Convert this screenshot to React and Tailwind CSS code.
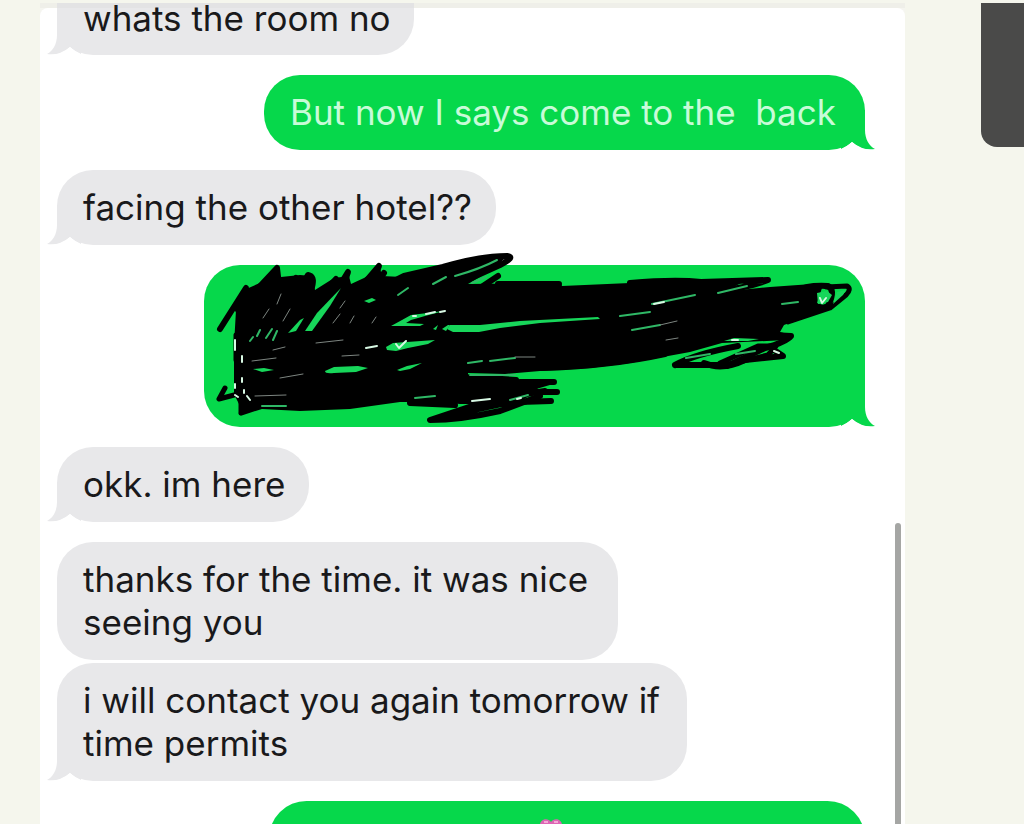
import React from 'react';
import clsx from 'clsx';

const messages = [
  { id: 1, from: 'them', text: 'whats the room no', tail: true, shape: 'w-[357px] h-[52px] leading-[30px] rounded-b-[36px]' },
  { id: 2, from: 'me', text: 'But now I says come to the  back', tail: true, shape: 'mt-5 w-[601px] py-4 rounded-[36px]' },
  { id: 3, from: 'them', text: 'facing the other hotel??', tail: true, shape: 'mt-5 w-[439px] py-4 rounded-[36px]' },
  { id: 4, from: 'me', redacted: true, tail: true, shape: 'mt-5 w-[661px] h-[162px] rounded-[36px]' },
  { id: 5, from: 'them', text: 'okk. im here', tail: true, shape: 'mt-5 w-[252px] py-4 rounded-[36px]' },
  { id: 6, from: 'them', text: 'thanks for the time. it was nice\nseeing you', shape: 'mt-5 w-[561px] py-4 rounded-[36px]' },
  { id: 7, from: 'them', text: 'i will contact you again tomorrow if\ntime permits', tail: true, shape: 'mt-[3px] w-[630px] py-4 rounded-[36px]' },
  { id: 8, from: 'me', heart: true, shape: 'mt-5 w-[596px] h-[75px] pt-[18px] pr-8 rounded-[38px]' },
];

function Tail({ mine }) {
  return (
    <svg
      viewBox="0 0 34 40"
      className={clsx('absolute bottom-0 h-10 w-[34px]', mine ? '-right-[10px] text-[#06d84b]' : '-left-[10px] -scale-x-100 text-[#e8e8ea]')}
    >
      <path d="M0 0H24V20C24 29 28 36 34 39Q22 41 11 32Q5 37 0 39Z" fill="currentColor" />
      <path d="M-2 40Q5 38 11 32Q18 39 29 40Z" fill="white" />
    </svg>
  );
}

function Scribble() {
  return (
    <svg viewBox="204 265 661 162" className="absolute inset-0 h-full w-full overflow-visible" fill="none" strokeLinecap="round" strokeLinejoin="round">
      {/* main mass */}
      <path
        fill="black"
        d="M234 345L236 310L244 290L262 282L276 270L281 277L300 275L312 276L315 290L334 278L349 276L351 284L364 278L380 268L382 276L402 277L440 266L485 256L505 258L495 268L468 284L560 283L562 286L630 283L672 279L702 280L745 281L722 293L740 290L770 287L812 284L822 288L817 303L830 307L810 315L784 325L780 332L792 335L786 340L722 343L690 352L630 363L590 368L540 371L505 374L468 373L468 376L516 379L540 385L535 392L520 402L490 404L460 404L440 402L400 402L350 409L300 411L262 409L241 408L234 394Z"
      />
      {/* outer strokes */}
      <g stroke="black" strokeWidth="6">
        <path d="M220 329L246 288L244 310M240 332L262 284M238 310L277 268L279 285L266 314" />
        <path d="M262 318L296 278L283 318L308 275Q315 276 312 287L294 321" />
        <path d="M304 315L336 279L321 316L348 272L335 310M350 300L379 266L366 299L384 273" />
        <path d="M384 286L404 276L443 267Q480 256 507 256Q516 257 500 265L440 292M498 276L480 288" />
        <path d="M498 284H559M630 283Q675 279 701 282L768 280Q750 287 719 291" />
        <path d="M800 290Q806 285 828 286Q836 290 828 306L800 316" />
        <path d="M826 287L847 286Q852 289 846 295L830 308L788 322" strokeWidth="5" />
        <path d="M752 334L791 336Q786 342 765 348L727 366" />
        <path d="M675 365Q695 354 738 346M675 365H728M704 363Q722 371 745 360L783 356L774 350" />
        <path d="M720 363L758 346L776 346L768 355L726 365" strokeWidth="5" />
        <path d="M540 368Q610 366 665 354M470 377L516 380M520 382H554M520 392H557M520 402L551 401" />
        <path d="M549 382L508 394L430 420Q460 420 500 411L540 396M455 414L515 401M410 403L455 405" />
        <path d="M480 401L545 391M430 400L480 396" />
        <path d="M225 388L219 399L238 394M236 335L236 360M241 360V413L266 405M241 413L256 395" strokeWidth="5" />
      </g>
      {/* gaps between strokes */}
      <g fill="#17d65a">
        <path d="M325 371L334 367L358 366L368 368L356 372L334 373Q325 374 325 371Z" />
        <path d="M397 370L407 366L422 363L410 369L400 371Z" />
        <path d="M386 347L393 343L435 340L428 344L408 348L396 351L387 350Z" />
        <path d="M391 326L402 320L411 315L444 311L425 316L411 320L406 323L424 324L420 326Z" />
        <path d="M453 332L447 329L450 325L480 325L520 321L598 317L600 319L540 323L500 328L479 332Z" />
        <path d="M305 331L317 313L341 288L330 306L312 331Z" />
        <path d="M288 333L300 320L304 318L296 331Z" />
        <path d="M817 293L827 291L832 295L828 302L818 304Z" />
        <path d="M833 304L837 292L846 290L843 295Z" />
        <path d="M724 341L734 338L759 339L748 341Z" />
        <path d="M253 369L264 368L274 370L262 372ZM364 301L372 298L376 300L369 303Z" />
        <path d="M433 329L438 325L436 330ZM442 329L448 325L450 325L446 331Z" />
      </g>
      <g stroke="#2fb866" strokeWidth="2">
        <path d="M257 336L260 330M266 338L272 329M273 340L277 331M250 341L253 337" />
        <path d="M398 295L408 288M433 284L446 277M455 276Q480 269 497 260M472 283L486 277" />
        <path d="M468 363L482 361M490 361L515 358M470 375L515 375" />
        <path d="M620 316L650 312M632 330L660 325M652 304L695 295M718 293L747 286M782 304L798 302" />
        <path d="M686 358L710 354M736 354L755 351M415 398L435 396M510 400L528 395M262 406L286 406" />
      </g>
      <g stroke="#7d8580" strokeWidth="1">
        <path d="M277 304L281 294M263 318L269 309M283 321L290 309M333 323L340 314M350 323L354 316M340 308L345 301M372 323L376 317" />
        <path d="M316 343L343 340M342 356L359 355M273 350L285 347M280 378L303 374M255 396L286 395M252 361L276 358M666 340L678 338M515 357L535 357M660 325L677 321" />
      </g>
      <g stroke="#d8f9e4" strokeWidth="2">
        <path d="M396 344L399 348L406 341M366 348L377 346M235 340V350M242 356V362M242 378V382M235 384V388M235 395L238 397M247 396L250 400M244 390V393" />
        <path d="M413 316H416M426 314L435 312M440 312L445 311M472 401L490 399M517 399L521 398M820 298L822 303L826 298M774 351L779 353M654 304L664 302M732 340H738" />
      </g>
    </svg>
  );
}

function Heart() {
  return (
    <svg viewBox="0 0 22 20" className="mx-auto h-5 w-[22px]">
      <path d="M11 19C5 15 0 11 0 6C0 0 8-2 11 3C14-2 22 0 22 6C22 11 17 15 11 19Z" fill="#dc65b4" />
      <path d="M4 3H8M14 3H18" stroke="#f7a5d6" strokeWidth="2" />
    </svg>
  );
}

function Bubble({ message }) {
  const mine = message.from === 'me';
  return (
    <li
      className={clsx(
        'relative max-w-full shrink-0 whitespace-pre',
        message.shape,
        message.text && 'pl-[26px]',
        mine ? 'self-end bg-[#06d84b] text-[#c8fbd8]' : 'self-start bg-[#e8e8ea] text-[#19191b]'
      )}
    >
      {message.tail && <Tail mine={mine} />}
      {message.text && <p className="relative">{message.text}</p>}
      {message.redacted && <Scribble />}
      {message.heart && <Heart />}
    </li>
  );
}

export default function App() {
  return (
    <div className="flex h-screen overflow-hidden bg-[#f5f6ed] pt-[3px] pl-10 font-['Inter','Liberation_Sans',sans-serif]">
      <main className="relative min-w-0 flex-1 overflow-hidden bg-[#f5f5f0]">
        <div className="absolute inset-x-0 top-[5px] bottom-0 rounded-t-lg bg-white" />
        <ul className="relative flex flex-col pr-10 pl-[17px] text-[35px] leading-[43px]">
          {messages.map(m => (
            <Bubble key={m.id} message={m} />
          ))}
        </ul>
        {/* shade under the top edge */}
        <div className="absolute inset-x-0 top-0 h-[5px] bg-[#8a8a70]/5" />
        {/* scroll thumb */}
        <div className="absolute right-1 bottom-0 h-[301px] w-[6px] rounded-t-full bg-[#a5a6a4]" />
      </main>
      <aside className="flex w-[119px] shrink-0 justify-end">
        <div className="h-[144px] w-[43px] rounded-bl-2xl bg-[#4a4a49]" />
      </aside>
    </div>
  );
}
